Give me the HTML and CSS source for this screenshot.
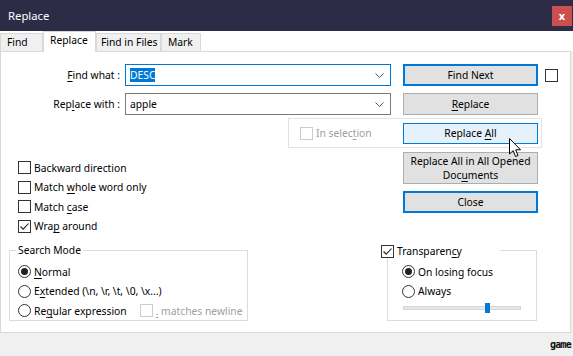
FILE: index.html
```html
<!DOCTYPE html>
<html lang="en">
<head>
    <meta charset="UTF-8">
    <title>Replace</title>
    <link rel="stylesheet" href="styles.css">
</head>
<body>
<div class="window">
    <!-- Pasek tytułu -->
    <div class="titlebar">
        <span class="title">Replace</span>
        <span class="close">x</span>
    </div>

    <!-- Zakładki -->
    <div class="tabs">
        <div class="tab">Find</div>
        <div class="tab active">Replace</div>
        <div class="tab">Find in Files</div>
        <div class="tab">Mark</div>
    </div>

    <div class="panel">
        <div class="row">
            <label class="label"><u>F</u>ind what :</label>
            <div class="combo focused">
                <span class="sel">DESC</span>
                <svg class="chevron" width="9" height="5" viewBox="0 0 9 5"><path d="M0.5 0.5 L4.5 4.5 L8.5 0.5" fill="none" stroke="#555" stroke-width="1"/></svg>
            </div>
            <button class="btn default">Find Next</button>
            <span class="check side-check"></span>
        </div>
        <div class="row row-second">
            <label class="label">Rep<u>l</u>ace with :</label>
            <div class="combo">
                <span>apple</span>
                <svg class="chevron" width="9" height="5" viewBox="0 0 9 5"><path d="M0.5 0.5 L4.5 4.5 L8.5 0.5" fill="none" stroke="#555" stroke-width="1"/></svg>
            </div>
            <button class="btn"><u>R</u>eplace</button>
        </div>

        <div class="selection-group">
            <span class="check disabled"></span>
            <span class="muted">In selec<u>t</u>ion</span>
            <button class="btn hover">Replace <u>A</u>ll</button>
            <svg class="cursor" width="13" height="20" viewBox="0 0 13 20"><path d="M0.5 0.5 L0.5 16 L4.2 12.6 L6.6 18.5 L9 17.5 L6.7 11.8 L11.5 11.8 Z" fill="#fff" stroke="#000" stroke-width="1" stroke-linejoin="round"/></svg>
        </div>

        <div class="middle">
            <div class="options">
                <div class="opt"><span class="check"></span><span>Backward direction</span></div>
                <div class="opt"><span class="check"></span><span>Match <u>w</u>hole word only</span></div>
                <div class="opt"><span class="check"></span><span>Match <u>c</u>ase</span></div>
                <div class="opt"><span class="check checked"><svg width="11" height="11" viewBox="0 0 11 11"><path d="M1.5 5.5 L4.2 8.2 L9.5 2.5" fill="none" stroke="#222" stroke-width="1.1"/></svg></span><span>Wra<u>p</u> around</span></div>
            </div>
            <div class="side-buttons">
                <button class="btn tall">Replace All in All Opened Doc<u>u</u>ments</button>
                <button class="btn default close-btn">Close</button>
            </div>
        </div>

        <div class="groups">
            <div class="group search-mode">
                <span class="legend">Search Mode</span>
                <div class="opt"><span class="radio on"></span><span><u>N</u>ormal</span></div>
                <div class="opt"><span class="radio"></span><span>E<u>x</u>tended (\n, \r, \t, \0, \x...)</span></div>
                <div class="opt"><span class="radio"></span><span>Re<u>g</u>ular expression</span><span class="check disabled newline-check"></span><span class="muted"><u>.</u> matches newline</span></div>
            </div>
            <div class="group transparency">
                <span class="legend legend-check"><span class="check checked"><svg width="11" height="11" viewBox="0 0 11 11"><path d="M1.5 5.5 L4.2 8.2 L9.5 2.5" fill="none" stroke="#222" stroke-width="1.1"/></svg></span><span>Transparen<u>c</u>y</span></span>
                <div class="opt"><span class="radio on"></span><span>On losing focus</span></div>
                <div class="opt"><span class="radio"></span><span>Always</span></div>
                <div class="slider">
                    <span class="thumb"></span>
                </div>
            </div>
        </div>
    </div>

    <div class="footer"><span class="watermark">game</span></div>
</div>
</body>
</html>
```

FILE: styles.css
```css
/* Ogólne ustawienia */
body {
    margin: 0;
    padding: 0;
    font-family: "Noto Sans", "Open Sans", sans-serif;
    font-size: 10.3px;
    color: #000;
}

u {
    text-decoration-thickness: 1px;
    text-underline-offset: 2px;
}

.window {
    width: 573px;
    height: 356px;
    background-color: #f0f0f0;
    overflow: hidden;
}

/* Pasek tytułu */
.titlebar {
    height: 31px;
    background-color: #2d2c47;
    display: flex;
    align-items: center;
    justify-content: space-between;
    padding-left: 8px;
    box-sizing: border-box;
}

.title {
    color: #fff;
    font-size: 11.3px;
}

.close {
    width: 20px;
    height: 20px;
    margin-right: 1px;
    background-color: #c9504f;
    color: #fff;
    font-weight: bold;
    font-size: 11px;
    display: flex;
    align-items: center;
    justify-content: center;
    line-height: 1;
}

/* Zakładki */
.tabs {
    height: 20px;
    background-color: #fff;
    display: flex;
    align-items: flex-end;
}

.tab {
    height: 18px;
    padding: 0 6px;
    border: 1px solid #d9d9d9;
    border-bottom: none;
    background-color: #f0f0f0;
    box-sizing: border-box;
    line-height: 17px;
    white-space: nowrap;
}

.tab:first-child {
    width: 43px;
}

.tab.active {
    height: 21px;
    margin-bottom: -1px;
    background-color: #fff;
    position: relative;
    z-index: 1;
    width: 53px;
    line-height: 17px;
}

.tab:nth-child(3) {
    width: 65px;
    padding-left: 4px;
}

.tab:nth-child(4) {
    width: 40px;
}

/* Panel główny */
.panel {
    width: 571px;
    height: 282px;
    box-sizing: border-box;
    border: 1px solid #d9d9d9;
    background-color: #fff;
    padding-top: 12px;
}

.row {
    display: flex;
    align-items: center;
    height: 22px;
}

.row-second {
    margin-top: 7px;
}

.label {
    width: 119px;
    margin-right: 5px;
    text-align: right;
}

.combo {
    width: 266px;
    height: 22px;
    box-sizing: border-box;
    border: 1px solid #7a7a7a;
    display: flex;
    align-items: center;
    justify-content: space-between;
    padding: 0 6px 0 4px;
}

.combo.focused {
    border-color: #0078d7;
}

.sel {
    background-color: #0078d7;
    color: #fff;
    line-height: 14px;
}

.btn {
    font-family: inherit;
    font-size: 10.3px;
    color: #000;
    width: 135px;
    height: 22px;
    margin: 0 0 0 12px;
    padding: 0;
    box-sizing: border-box;
    background-color: #e1e1e1;
    border: 1px solid #adadad;
    line-height: 14px;
}

.btn.default {
    border: 2px solid #0078d7;
}

.btn.hover {
    background-color: #e5f1fb;
    border-color: #0078d7;
    height: 21px;
}

.check {
    display: inline-flex;
    align-items: center;
    justify-content: center;
    width: 13px;
    height: 13px;
    box-sizing: border-box;
    border: 1px solid #333;
    background-color: #fff;
    flex-shrink: 0;
}

.check.disabled {
    border-color: #cccccc;
}

.side-check {
    margin-left: 7px;
}

.muted {
    color: #a0a0a0;
}

/* Grupa "In selection" */
.selection-group {
    position: relative;
    margin: 3px 0 0 287px;
    width: 254px;
    height: 30px;
    box-sizing: border-box;
    border: 1px solid #e3e3e3;
    display: flex;
    align-items: center;
    padding-left: 11px;
}

.selection-group .muted {
    margin-left: 3px;
}

.selection-group .btn {
    margin-left: auto;
    margin-right: 3px;
}

.cursor {
    position: absolute;
    left: 220px;
    top: 19px;
}

/* Opcje i przyciski boczne */
.middle {
    display: flex;
    margin-top: 4px;
}

.options {
    width: 402px;
    box-sizing: border-box;
    padding: 6px 0 0 17px;
}

.opt {
    display: flex;
    align-items: center;
    height: 19.5px;
    white-space: nowrap;
}

.opt .check,
.opt .radio {
    margin-right: 3px;
}

.side-buttons {
    display: flex;
    flex-direction: column;
}

.side-buttons .btn {
    margin-left: 0;
}

.btn.tall {
    height: 32px;
    line-height: 14px;
    padding: 0 6px;
}

.close-btn {
    margin-top: 7px !important;
}

/* Grupy na dole */
.groups {
    display: flex;
    margin-top: 14px;
}

.group {
    position: relative;
    height: 71px;
    box-sizing: border-box;
    border: 1px solid #dcdcdc;
    padding-top: 11px;
}

.search-mode {
    width: 239px;
    margin-left: 8px;
    padding-left: 8px;
}

.transparency {
    width: 150px;
    margin-left: 139px;
    padding-left: 14px;
}

.legend {
    position: absolute;
    top: -8px;
    left: 6px;
    height: 14px;
    line-height: 14px;
    padding: 0 2px;
    background-color: #fff;
}

.legend-check {
    top: -7px;
    left: -7px;
    width: 119px;
    padding: 0;
    display: flex;
    align-items: center;
}

.legend-check .check {
    margin-right: 3px;
}

.radio {
    display: inline-block;
    position: relative;
    width: 13px;
    height: 13px;
    box-sizing: border-box;
    border: 1px solid #333;
    border-radius: 50%;
    background-color: #fff;
    flex-shrink: 0;
}

.radio.on::after {
    content: "";
    position: absolute;
    left: 2px;
    top: 2px;
    width: 7px;
    height: 7px;
    border-radius: 50%;
    background-color: #222;
}

.newline-check {
    margin-left: 13px;
    margin-right: 3px !important;
}

.slider {
    position: relative;
    width: 118px;
    height: 4px;
    margin: 5px 0 0 1px;
    background-color: #e7e7e7;
    border: 1px solid #d6d6d6;
    box-sizing: border-box;
}

.thumb {
    position: absolute;
    left: 81px;
    top: -4px;
    width: 5px;
    height: 10px;
    background-color: #0078d7;
}

/* Stopka */
.footer {
    height: 23px;
    display: flex;
    justify-content: flex-end;
    align-items: center;
    padding-right: 2px;
}

.watermark {
    font-family: "DejaVu Sans Mono", monospace;
    font-weight: bold;
    font-size: 10px;
    letter-spacing: -0.8px;
    color: #111;
}
```
